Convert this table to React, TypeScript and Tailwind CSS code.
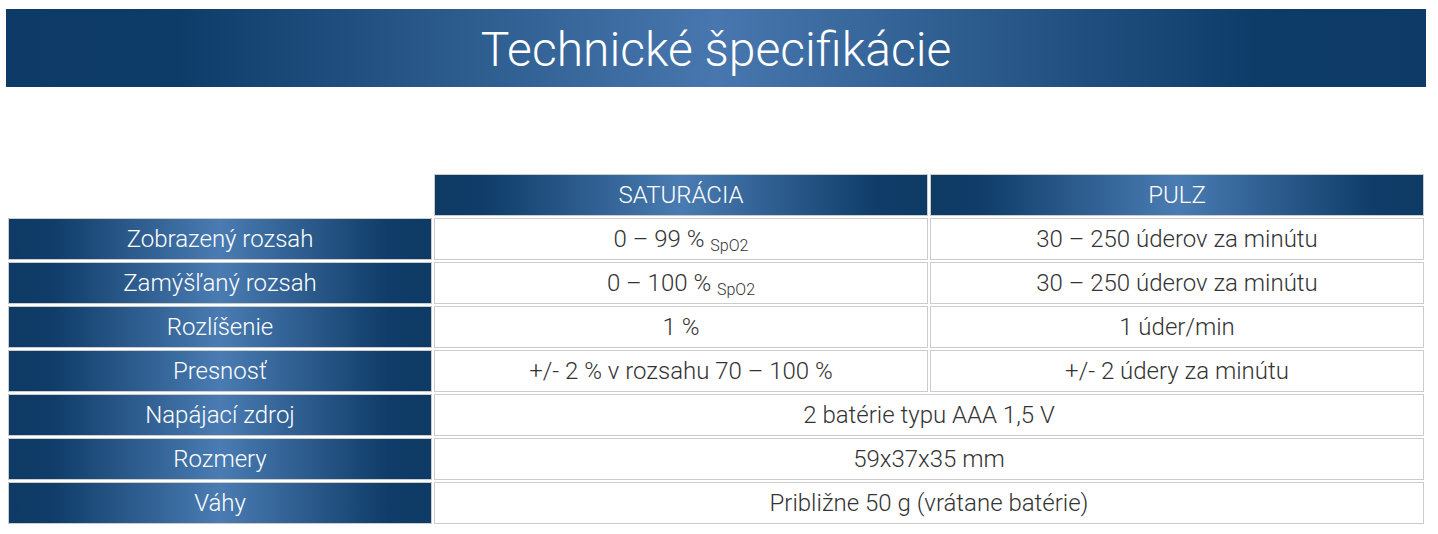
import * as React from "react"

const bandBg =
  "bg-[linear-gradient(to_right,#0d3a66_0%,#0e3c69_12%,#4777ae_50%,#0e3c69_88%,#0d3a66_100%)]"
const cellBg =
  "bg-[linear-gradient(to_right,#0e3a66_0%,#0f3c68_10%,#4a7cb3_50%,#0f3c68_90%,#0e3a66_100%)]"

type Row = {
  label: string
  spo2?: React.ReactNode
  pulse?: React.ReactNode
  both?: string
}

const ROWS: Row[] = [
  {
    label: "Zobrazený rozsah",
    spo2: (
      <>
        0 – 99 % <sub className="text-[16px]">SpO2</sub>
      </>
    ),
    pulse: "30 – 250 úderov za minútu",
  },
  {
    label: "Zamýšľaný rozsah",
    spo2: (
      <>
        0 – 100 % <sub className="text-[16px]">SpO2</sub>
      </>
    ),
    pulse: "30 – 250 úderov za minútu",
  },
  { label: "Rozlíšenie", spo2: "1 %", pulse: "1 úder/min" },
  {
    label: "Presnosť",
    spo2: "+/- 2 % v rozsahu 70 – 100 %",
    pulse: "+/- 2 údery za minútu",
  },
  { label: "Napájací zdroj", both: "2 batérie typu AAA 1,5 V" },
  { label: "Rozmery", both: "59x37x35 mm" },
  { label: "Váhy", both: "Približne 50 g (vrátane batérie)" },
]

function HeadCell({ children }: { children?: React.ReactNode }) {
  return (
    <div
      className={`flex h-[42px] items-center justify-center border border-[#cccccc] text-[24px] font-light text-white ${cellBg}`}
    >
      {children}
    </div>
  )
}

function DataCell({
  children,
  wide,
}: {
  children: React.ReactNode
  wide?: boolean
}) {
  return (
    <div
      className={`flex h-[42px] items-center justify-center border border-[#cccccc] bg-white text-[24px] font-light text-[#333333] ${
        wide ? "col-span-2" : ""
      }`}
    >
      <span>{children}</span>
    </div>
  )
}

export default function App() {
  return (
    <div
      className="h-[534px] w-[1438px] bg-white pt-[9px]"
      style={{ fontFamily: "Roboto, 'Liberation Sans', sans-serif" }}
    >
      <div
        className={`mx-[6px] mr-[12px] flex h-[78px] items-center justify-center pt-[4px] ${bandBg}`}
      >
        <h1 className="text-[48px] font-light leading-none text-white">
          Technické špecifikácie
        </h1>
      </div>

      <div className="ml-[8px] mt-[87px] grid w-[1416px] grid-cols-[424px_494px_494px] gap-[2px]">
        <div />
        <HeadCell>SATURÁCIA</HeadCell>
        <HeadCell>PULZ</HeadCell>
        {ROWS.map((row) => (
          <React.Fragment key={row.label}>
            <HeadCell>{row.label}</HeadCell>
            {row.both ? (
              <DataCell wide>{row.both}</DataCell>
            ) : (
              <>
                <DataCell>{row.spo2}</DataCell>
                <DataCell>{row.pulse}</DataCell>
              </>
            )}
          </React.Fragment>
        ))}
      </div>
    </div>
  )
}
